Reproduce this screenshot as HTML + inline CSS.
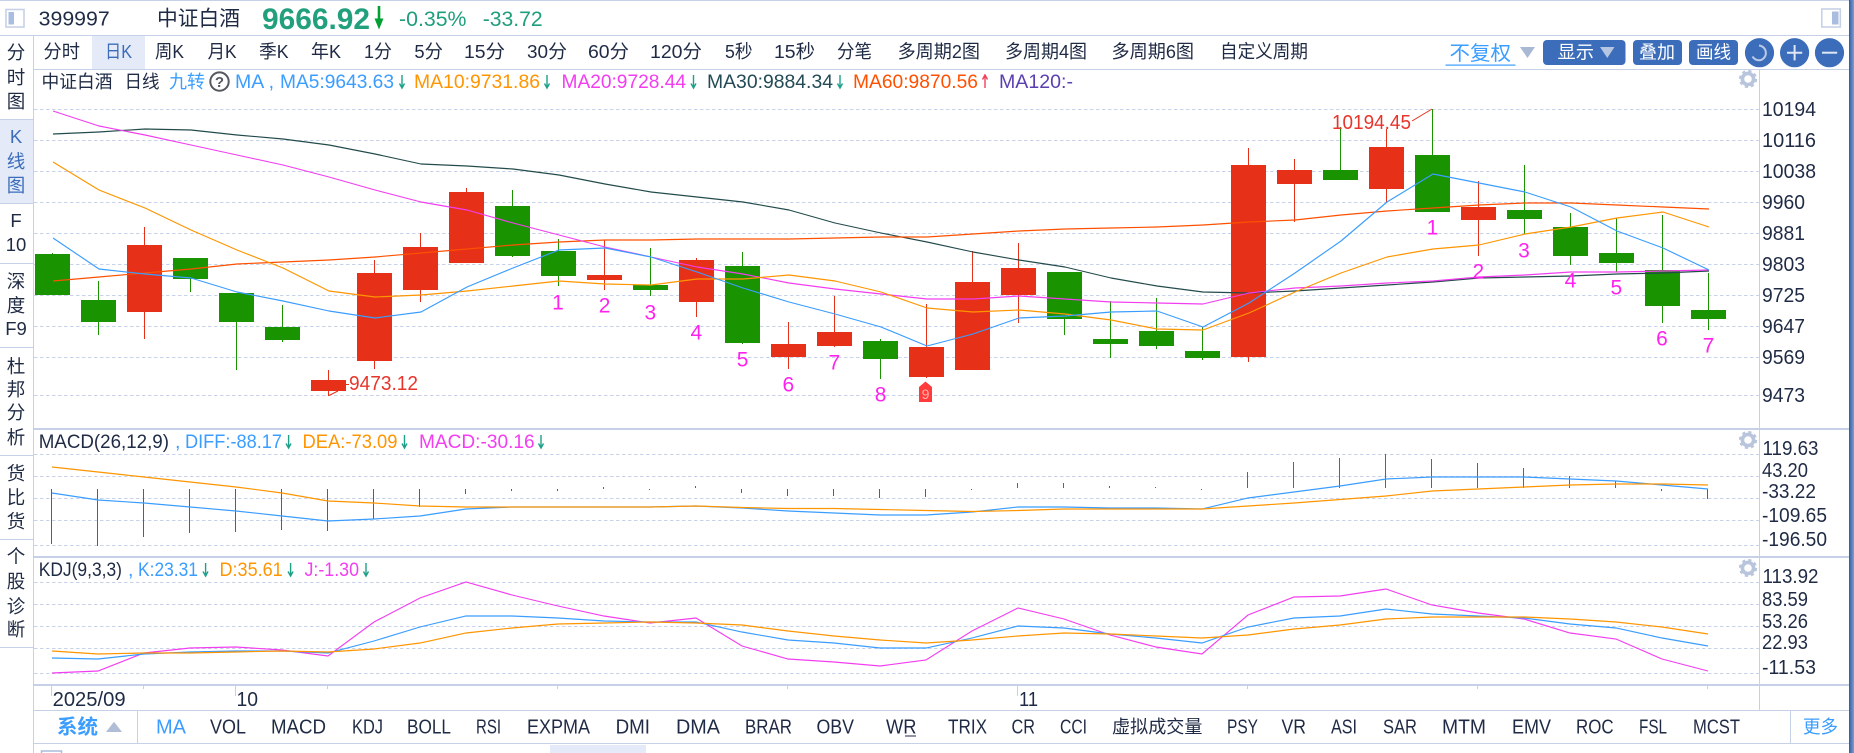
<!DOCTYPE html>
<html lang="zh"><head><meta charset="utf-8"><title>中证白酒</title>
<style>
html,body{margin:0;padding:0;background:#fff;width:1854px;height:753px;overflow:hidden}
svg{display:block;position:absolute;left:0;top:0}
text{font-family:"Liberation Sans","Noto Sans CJK SC",sans-serif;fill:#1f2a44;font-size:18px}
.ax text{font-size:20.5px}
.num text{fill:#ff22ee;font-size:21px;text-anchor:middle}
.side text{text-anchor:middle;font-size:18.5px}
.b{fill:#3a9dff}.o{fill:#ff9500}.p{fill:#f23ef0}.d{fill:#234b55}.r{fill:#ff5000}.v{fill:#5a3fb0}
.bar text{font-size:18.5px}
.lg text{font-size:19.5px}
.tb text{font-size:20px}
.tb text.cj,.lg text.cj{font-size:18px}
</style></head><body>
<svg width="1854" height="753" viewBox="0 0 1854 753" xmlns="http://www.w3.org/2000/svg">
<defs><linearGradient id="sb" x1="0" x2="1" y1="0" y2="0"><stop offset="0" stop-color="#2f5ca3"/><stop offset="1" stop-color="#7f9dd0"/></linearGradient></defs>
<!-- frames -->
<rect x="0" y="119" width="33" height="84" fill="#e4eaf7"/>
<rect x="92" y="36" width="53" height="33" fill="#e4eaf7"/>
<rect x="550" y="745" width="96" height="8" fill="#e4eaf7"/>
<g fill="#c6d1e8">
<rect x="0" y="0" width="1849" height="1"/>
<rect x="0" y="35" width="1849" height="1"/>
<rect x="34" y="69" width="1815" height="1"/>
<rect x="33" y="36" width="1" height="717"/>
<rect x="1759" y="70" width="1" height="640" fill="#c6d1e8"/>
<rect x="34" y="428" width="1815" height="2"/>
<rect x="34" y="556" width="1815" height="2"/>
<rect x="34" y="684" width="1815" height="2"/>
<rect x="34" y="710" width="1815" height="1"/>
<rect x="34" y="743" width="1815" height="1"/>
<rect x="137" y="711" width="1" height="32"/>
<rect x="1790" y="711" width="1" height="32"/>
<rect x="0" y="119" width="33" height="1"/><rect x="0" y="203" width="33" height="1"/>
<rect x="0" y="263" width="33" height="1"/><rect x="0" y="347" width="33" height="1"/>
<rect x="0" y="455" width="33" height="1"/><rect x="0" y="539" width="33" height="1"/>
<rect x="0" y="647" width="33" height="1"/>
</g>
<rect x="1849" y="0" width="5" height="753" fill="url(#sb)"/>
<rect x="41.5" y="751" width="20" height="3" fill="none" stroke="#a9bbdb" stroke-width="1.5"/>
<!-- grid -->
<path d="M34 109.5H1759M34 140.5H1759M34 171.5H1759M34 202.5H1759M34 233.5H1759M34 264.5H1759M34 295.5H1759M34 326.5H1759M34 357.5H1759M34 395.5H1759M34 454.5H1759M34 476.5H1759M34 498.5H1759M34 520.5H1759M34 545.5H1759M34 582.5H1759M34 604.5H1759M34 626.5H1759M34 648.5H1759M34 673.5H1759" stroke="#c8d2e8" stroke-width="1" stroke-dasharray="3.5 2.5" fill="none"/>
<!-- header -->
<rect x="6" y="9.5" width="18" height="17.5" fill="#fff" stroke="#c6d1e8" stroke-width="1.6"/>
<rect x="8.5" y="12" width="5.5" height="12.5" fill="#a8bddf"/>
<rect x="1821.8" y="9" width="18.5" height="18" fill="#fff" stroke="#c6d1e8" stroke-width="1.6"/>
<rect x="1832" y="11.5" width="6.5" height="13" fill="#a8bddf"/>
<text x="38.7" y="25.5" style="font-size:20.5px" textLength="71" lengthAdjust="spacingAndGlyphs">399997</text>
<text x="157" y="25.5" style="font-size:21px" textLength="83" lengthAdjust="spacingAndGlyphs">中证白酒</text>
<text x="262" y="29" style="font-size:30px;font-weight:bold;fill:#22a07e" textLength="108" lengthAdjust="spacingAndGlyphs">9666.92</text>
<path d="M377.7 6h2.6v12.5h3.2l-4.5 11-4.5-11h3.2z" fill="#00a032"/>
<text x="399" y="26" style="font-size:21.5px;fill:#1f9e7c" textLength="67.5" lengthAdjust="spacingAndGlyphs">-0.35%</text>
<text x="482.7" y="26" style="font-size:21.5px;fill:#1f9e7c" textLength="60" lengthAdjust="spacingAndGlyphs">-33.72</text>
<!-- toolbar -->
<g class="bar">
<text x="43.5" y="58" textLength="36.5" lengthAdjust="spacingAndGlyphs">分时</text>
<text x="105" y="58" textLength="27" lengthAdjust="spacingAndGlyphs" style="fill:#3b6dbb">日K</text>
<text x="155" y="58" textLength="29" lengthAdjust="spacingAndGlyphs">周K</text>
<text x="207.6" y="58" textLength="29" lengthAdjust="spacingAndGlyphs">月K</text>
<text x="259" y="58" textLength="29.6" lengthAdjust="spacingAndGlyphs">季K</text>
<text x="311" y="58" textLength="30" lengthAdjust="spacingAndGlyphs">年K</text>
<text x="364" y="58" textLength="28" lengthAdjust="spacingAndGlyphs">1分</text>
<text x="414.4" y="58" textLength="28.6" lengthAdjust="spacingAndGlyphs">5分</text>
<text x="464" y="58" textLength="41" lengthAdjust="spacingAndGlyphs">15分</text>
<text x="527" y="58" textLength="40" lengthAdjust="spacingAndGlyphs">30分</text>
<text x="588" y="58" textLength="41" lengthAdjust="spacingAndGlyphs">60分</text>
<text x="650" y="58" textLength="52" lengthAdjust="spacingAndGlyphs">120分</text>
<text x="725" y="58" textLength="27.5" lengthAdjust="spacingAndGlyphs">5秒</text>
<text x="774" y="58" textLength="41" lengthAdjust="spacingAndGlyphs">15秒</text>
<text x="837" y="58" textLength="35" lengthAdjust="spacingAndGlyphs">分笔</text>
<text x="897.6" y="58" textLength="82.4" lengthAdjust="spacingAndGlyphs">多周期2图</text>
<text x="1005" y="58" textLength="82" lengthAdjust="spacingAndGlyphs">多周期4图</text>
<text x="1111.5" y="58" textLength="82.5" lengthAdjust="spacingAndGlyphs">多周期6图</text>
<text x="1220" y="58" textLength="88" lengthAdjust="spacingAndGlyphs">自定义周期</text>
</g>
<text x="1449.5" y="60" style="font-size:20px;fill:#3a9dff" textLength="61.5" lengthAdjust="spacingAndGlyphs">不复权</text>
<rect x="1445.5" y="64.5" width="70" height="1.2" fill="#3a9dff"/>
<path d="M1520 47h15l-7.5 11z" fill="#a9b8d3"/>
<rect x="1543" y="40" width="82.5" height="25" rx="4" fill="#3b6dbb"/>
<rect x="1633" y="40" width="49" height="25" rx="4" fill="#3b6dbb"/>
<rect x="1689" y="40" width="49" height="25" rx="4" fill="#3b6dbb"/>
<text x="1557.5" y="58.5" style="font-size:18px;fill:#fff" textLength="36.5" lengthAdjust="spacingAndGlyphs">显示</text>
<path d="M1600 47h14.5l-7.2 11z" fill="#b5c5e2"/>
<text x="1639" y="58.5" style="font-size:18px;fill:#fff" textLength="36" lengthAdjust="spacingAndGlyphs">叠加</text>
<text x="1696" y="58.5" style="font-size:18px;fill:#fff" textLength="35" lengthAdjust="spacingAndGlyphs">画线</text>
<circle cx="1759.5" cy="52.7" r="14.6" fill="#3b6dbb"/>
<circle cx="1794.6" cy="52.7" r="14.6" fill="#3b6dbb"/>
<circle cx="1829.5" cy="52.7" r="14.6" fill="#3b6dbb"/>
<path d="M1759 45.5a7.5 7.5 0 0 1 2 14.5a7.5 7.5 0 0 1-8.5-3.5" fill="none" stroke="#b9c9e6" stroke-width="2"/>
<path d="M1787 52.7h15.2M1794.6 45v15.4" stroke="#dfe7f5" stroke-width="2" fill="none"/>
<path d="M1822 52.7h15.2" stroke="#dfe7f5" stroke-width="2" fill="none"/>
<!-- sidebar -->
<g class="side">
<text x="16" y="59">分</text><text x="16" y="84">时</text><text x="16" y="108">图</text>
<text x="16" y="143" style="fill:#3b6dbb">K</text><text x="16" y="168" style="fill:#3b6dbb">线</text><text x="16" y="192" style="fill:#3b6dbb">图</text>
<text x="16" y="227">F</text><text x="16" y="251">10</text>
<text x="16" y="288">深</text><text x="16" y="312">度</text><text x="16" y="335">F9</text>
<text x="16" y="373">杜</text><text x="16" y="396">邦</text><text x="16" y="419">分</text><text x="16" y="444">析</text>
<text x="16" y="480">货</text><text x="16" y="504">比</text><text x="16" y="528">货</text>
<text x="16" y="563">个</text><text x="16" y="588">股</text><text x="16" y="613">诊</text><text x="16" y="636">断</text>
</g>
<!-- legend main -->
<g class="lg">
<text x="41.5" y="88" class="cj" textLength="71" lengthAdjust="spacingAndGlyphs">中证白酒</text>
<text x="124.5" y="88" class="cj" textLength="35" lengthAdjust="spacingAndGlyphs">日线</text>
<text x="169" y="88" class="b cj" textLength="36" lengthAdjust="spacingAndGlyphs">九转</text>
<text x="235" y="88" class="b" textLength="39" lengthAdjust="spacingAndGlyphs">MA ,</text>
<text x="280" y="88" class="b" textLength="114" lengthAdjust="spacingAndGlyphs">MA5:9643.63</text>
<text x="414" y="88" class="o" textLength="126" lengthAdjust="spacingAndGlyphs">MA10:9731.86</text>
<text x="561.5" y="88" class="p" textLength="124.5" lengthAdjust="spacingAndGlyphs">MA20:9728.44</text>
<text x="707" y="88" class="d" textLength="126" lengthAdjust="spacingAndGlyphs">MA30:9884.34</text>
<text x="853" y="88" class="r" textLength="125" lengthAdjust="spacingAndGlyphs">MA60:9870.56</text>
<text x="999" y="88" class="v" textLength="74" lengthAdjust="spacingAndGlyphs">MA120:-</text>
</g>
<circle cx="219.5" cy="81.6" r="9.2" fill="#fff" stroke="#55585f" stroke-width="2"/>
<text x="219.5" y="87" text-anchor="middle" style="font-size:15px;fill:#55585f;font-weight:bold">?</text>
<path d="M402 75V88M399.5 83.5L402 88L404.5 83.5M547 75V88M544.5 83.5L547 88L549.5 83.5M693.5 75V88M691 83.5L693.5 88L696 83.5M840 75V88M837.5 83.5L840 88L842.5 83.5M288.6 435V448M286 443.5L288.6 448L291 443.5M404.5 435V448M402 443.5L404.5 448L407 443.5M541 435V448M538.5 443.5L541 448L543.5 443.5M205.6 563V576M203 571.5L205.6 576L208 571.5M290.6 563V576M288 571.5L290.6 576L293 571.5M366 563V576M363.5 571.5L366 576L368.5 571.5" stroke="#1da08a" stroke-width="1.4" fill="none"/>
<path d="M985 88V75M982.5 79.5L985 75L987.5 79.5" stroke="#f0405a" stroke-width="1.4" fill="none"/>
<!-- gears -->
<g fill="none" stroke="#b9c5dc">
<circle cx="1748" cy="79" r="5.6" stroke-width="3.6"/><circle cx="1748" cy="79" r="8" stroke-width="2.2" stroke-dasharray="3.1 3.2"/>
<circle cx="1748" cy="440" r="5.6" stroke-width="3.6"/><circle cx="1748" cy="440" r="8" stroke-width="2.2" stroke-dasharray="3.1 3.2"/>
<circle cx="1748" cy="568" r="5.6" stroke-width="3.6"/><circle cx="1748" cy="568" r="8" stroke-width="2.2" stroke-dasharray="3.1 3.2"/>
</g>
<!-- candles -->
<path shape-rendering="crispEdges" fill="#1a9300" d="M35 254h35v41h-35zM81 300h35v22h-35zM173 258h35v21h-35zM219 293h35v29h-35zM265 327h35v13h-35zM495 206h35v50h-35zM541 251h35v25h-35zM633 285h35v5h-35zM725 266h35v77h-35zM863 341h35v18h-35zM1047 272h35v47h-35zM1093 339h35v5h-35zM1139 331h35v15h-35zM1185 351h35v7h-35zM1323 170h35v10h-35zM1415 155h35v57h-35zM1507 210h35v9h-35zM1553 227h35v29h-35zM1599 253h35v10h-35zM1645 270h35v36h-35zM1691 310h35v9h-35z"/>
<path shape-rendering="crispEdges" fill="#e63118" d="M127 245h35v67h-35zM311 380h35v11h-35zM357 273h35v88h-35zM403 247h35v43h-35zM449 192h35v71h-35zM587 275h35v5h-35zM679 260h35v42h-35zM771 344h35v13h-35zM817 332h35v14h-35zM909 347h35v30h-35zM955 282h35v88h-35zM1001 268h35v27h-35zM1231 165h35v192h-35zM1277 170h35v14h-35zM1369 147h35v42h-35zM1461 207h35v13h-35z"/>
<path shape-rendering="crispEdges" stroke="#1a9300" stroke-width="1" fill="none" d="M52.5 253V254M98.5 281V335M190.5 279V292M236.5 322V370M282.5 305V342M512.5 190V257M558.5 239V286M650.5 248V296M742.5 252V344M880.5 339V379M1064.5 319V335M1110.5 301V358M1156.5 298V349M1202.5 327V360M1340.5 127V180M1432.5 109V155M1524.5 165V234M1570.5 213V265M1616.5 218V272M1662.5 215V323M1708.5 273V330"/>
<path shape-rendering="crispEdges" stroke="#e63118" stroke-width="1" fill="none" d="M144.5 227V339M328.5 370V396M374.5 260V369M420.5 233V302M466.5 188V192M604.5 240V290M696.5 258V317M788.5 322V369M834.5 296V347M926.5 304V378M972.5 251V282M1018.5 243V323M1248.5 148V362M1294.5 159V222M1386.5 129V202M1478.5 181V256"/>
<!-- MA lines -->
<g fill="none" stroke-width="1.15" stroke-linejoin="round">
<polyline stroke="#234b4b" points="53,134 99,132 145,129 191,130 237,135 283,139 329,145 375,154 421,164 467,166 513,169 559,175 605,184 651,192 697,197 743,202 789,210 835,223 881,233 927,242 973,252 1019,260 1065,267 1111,278 1157,286 1203,292 1249,293 1295,291 1341,288 1387,285 1433,282 1479,278 1525,277 1571,276 1617,274 1663,273 1709,271"/>
<polyline stroke="#ff5000" points="53,281 99,277 145,273 191,269 237,264 283,262 329,260 375,257 421,253 467,249 513,245 559,242 605,240 651,240 697,239 743,239 789,239 835,238 881,237 927,237 973,234 1019,231 1065,229 1111,228 1157,227 1203,225 1249,222 1295,220 1341,215 1387,211 1433,208 1479,205 1525,203 1571,203 1617,205 1663,207 1709,209"/>
<polyline stroke="#f23ef0" points="53,111 99,126 145,135 191,145 237,155 283,165 329,177 375,190 421,202 467,210 513,223 559,235 605,247 651,257 697,267 743,274 789,283 835,289 881,294 927,299 973,299 1019,296 1065,299 1111,302 1157,303 1203,304 1249,293 1295,288 1341,286 1387,283 1433,281 1479,277 1525,275 1571,272 1617,272 1663,271 1709,270"/>
<polyline stroke="#ff9500" points="53,162 99,190 145,208 191,230 237,250 283,268 329,291 375,297 421,295 467,291 513,286 559,281 605,284 651,285 697,279 743,279 789,275 835,281 881,292 927,308 973,312 1019,310 1065,314 1111,320 1157,329 1203,330 1249,313 1295,292 1341,273 1387,257 1433,249 1479,245 1525,234 1571,227 1617,218 1663,212 1709,227"/>
<polyline stroke="#3a9dff" points="53,238 99,269 145,274 191,278 237,292 283,301 329,311 375,318 421,312 467,287 513,268 559,250 605,248 651,257 697,272 743,288 789,302 835,314 881,327 927,346 973,334 1019,318 1065,316 1111,312 1157,311 1203,327 1249,303 1295,273 1341,241 1387,202 1433,174 1479,183 1525,192 1571,207 1617,231 1663,248 1709,270"/>
</g>
<!-- extremes -->
<text x="1332" y="129" style="font-size:20px;fill:#e8352c" textLength="79" lengthAdjust="spacingAndGlyphs">10194.45</text>
<path d="M1432 109L1412 121" stroke="#e63118" stroke-width="1" fill="none"/>
<text x="349" y="390" style="font-size:20px;fill:#e8352c" textLength="69" lengthAdjust="spacingAndGlyphs">9473.12</text>
<path d="M329 395.5L338 391M346 384.5H349" stroke="#e63118" stroke-width="1" fill="none"/>
<!-- nine-turn numbers -->
<g class="num">
<text x="558" y="309.5">1</text><text x="604.6" y="312.5">2</text><text x="650.4" y="319.5">3</text><text x="696.3" y="339.5">4</text><text x="742.6" y="366.5">5</text><text x="788.4" y="391.5">6</text><text x="834.3" y="369.5">7</text><text x="880.6" y="401.5">8</text>
<text x="1432.5" y="234.5">1</text><text x="1478.4" y="278.5">2</text><text x="1524" y="257.5">3</text><text x="1570.5" y="287.5">4</text><text x="1616.4" y="294.5">5</text><text x="1662" y="345.5">6</text><text x="1708.5" y="352.5">7</text>
</g>
<path d="M925.5 381.5L932 387V402H919V387z" fill="#ff3b3b"/>
<text x="925.5" y="399" text-anchor="middle" style="font-size:14px;fill:#ffb0a8">9</text>
<!-- MACD -->
<g class="lg">
<text x="38.7" y="448" textLength="130.3" lengthAdjust="spacingAndGlyphs">MACD(26,12,9)</text>
<text x="175" y="448" class="b">,</text>
<text x="185" y="448" class="b" textLength="97" lengthAdjust="spacingAndGlyphs">DIFF:-88.17</text>
<text x="302.5" y="448" class="o" textLength="95" lengthAdjust="spacingAndGlyphs">DEA:-73.09</text>
<text x="419" y="448" class="p" textLength="115.6" lengthAdjust="spacingAndGlyphs">MACD:-30.16</text>
</g>
<path shape-rendering="crispEdges" stroke="#1a9300" fill="none" d="M51.5 489V544M97.5 489V546M143.5 489V537M189.5 489V533M235.5 489V532M281.5 489V530M327.5 489V531M373.5 489V519M419.5 489V507M465.5 489V494M511.5 489V491M557.5 489V491M649.5 489V490M741.5 489V493M787.5 489V496M833.5 489V496M879.5 489V498M925.5 489V497M971.5 489V490M1201.5 489V490M1661.5 489V491M1707.5 489V499"/>
<path shape-rendering="crispEdges" stroke="#e63118" fill="none" d="M603.5 487V489M695.5 486V488M1017.5 483V488M1063.5 483V488M1109.5 486V488M1155.5 487V488M1247.5 472V488M1293.5 462V488M1339.5 458V488M1385.5 454V488M1431.5 459V488M1477.5 463V488M1523.5 468V488M1569.5 476V488M1615.5 481V488"/>
<g fill="none" stroke-width="1.15">
<polyline stroke="#3a9dff" points="52,493 98,500 144,503 190,507 236,511 282,516 328,521 374,519 420,516 466,509 512,507 558,507 604,507 650,507 696,506 742,508 788,511 834,513 880,515 926,515 972,512 1018,507 1064,507 1110,508 1156,508 1202,509 1248,498 1294,492 1340,486 1386,479 1432,477 1478,477 1524,477 1570,479 1616,481 1662,485 1708,489"/>
<polyline stroke="#ff9500" points="52,467 98,472 144,477 190,482 236,487 282,493 328,501 374,503 420,506 466,507 512,507 558,507 604,507 650,507 696,506 742,507.5 788,508.5 834,508.5 880,509.5 926,510.5 972,511.5 1018,510.5 1064,509 1110,509 1156,509 1202,509 1248,506 1294,503 1340,499.5 1386,496 1432,491 1478,489 1524,487 1570,485 1616,484 1662,484 1708,485"/>
</g>
<!-- KDJ -->
<g class="lg">
<text x="38.7" y="576" textLength="83.3" lengthAdjust="spacingAndGlyphs">KDJ(9,3,3)</text>
<text x="128" y="576" class="b">,</text>
<text x="138" y="576" class="b" textLength="60" lengthAdjust="spacingAndGlyphs">K:23.31</text>
<text x="219.5" y="576" class="o" textLength="63.2" lengthAdjust="spacingAndGlyphs">D:35.61</text>
<text x="304.5" y="576" class="p" textLength="54.5" lengthAdjust="spacingAndGlyphs">J:-1.30</text>
</g>
<g fill="none" stroke-width="1.15">
<polyline stroke="#f23ef0" points="52,673 98,671 144,653 190,648 236,647 282,650 328,656 374,622 420,598 466,582 512,595 558,606 604,616 650,623 696,618 742,646 788,659 834,662 880,666 926,660 972,631 1018,608 1064,619 1110,635 1156,647 1202,654 1248,615 1294,597 1340,596 1386,589 1432,605 1478,613 1524,619 1570,633 1616,639 1662,659 1708,671"/>
<polyline stroke="#3a9dff" points="52,658 98,659 144,654 190,652 236,651 282,651 328,653 374,641 420,627 466,616 512,616 558,618 604,621 650,622 696,622 742,632 788,640 834,643 880,648 926,648 972,638 1018,626 1064,628 1110,634 1156,638 1202,643 1248,627 1294,618 1340,616 1386,609 1432,614 1478,616 1524,618 1570,624 1616,628 1662,638 1708,646"/>
<polyline stroke="#ff9500" points="52,651 98,654 144,653 190,653 236,652 282,651 328,652 374,649 420,643 466,633 512,628 558,624 604,623 650,622 696,623 742,625 788,631 834,636 880,640 926,643 972,640 1018,636 1064,633 1110,634 1156,636 1202,638 1248,635 1294,629 1340,625 1386,619 1432,617 1478,617 1524,617 1570,619 1616,622 1662,627 1708,634"/>
</g>
<!-- axes labels -->
<g class="ax">
<text x="1762" y="116" textLength="54" lengthAdjust="spacingAndGlyphs">10194</text>
<text x="1762" y="147" textLength="54" lengthAdjust="spacingAndGlyphs">10116</text>
<text x="1762" y="178" textLength="54" lengthAdjust="spacingAndGlyphs">10038</text>
<text x="1762" y="209" textLength="43" lengthAdjust="spacingAndGlyphs">9960</text>
<text x="1762" y="240" textLength="43" lengthAdjust="spacingAndGlyphs">9881</text>
<text x="1762" y="271" textLength="43" lengthAdjust="spacingAndGlyphs">9803</text>
<text x="1762" y="302" textLength="43" lengthAdjust="spacingAndGlyphs">9725</text>
<text x="1762" y="333" textLength="43" lengthAdjust="spacingAndGlyphs">9647</text>
<text x="1762" y="364" textLength="43" lengthAdjust="spacingAndGlyphs">9569</text>
<text x="1762" y="402" textLength="43" lengthAdjust="spacingAndGlyphs">9473</text>
<text x="1762.5" y="455" textLength="56" lengthAdjust="spacingAndGlyphs">119.63</text>
<text x="1762" y="477" textLength="46" lengthAdjust="spacingAndGlyphs">43.20</text>
<text x="1762" y="498" textLength="54" lengthAdjust="spacingAndGlyphs">-33.22</text>
<text x="1762" y="522" textLength="65" lengthAdjust="spacingAndGlyphs">-109.65</text>
<text x="1762" y="546" textLength="65" lengthAdjust="spacingAndGlyphs">-196.50</text>
<text x="1762.5" y="583" textLength="56" lengthAdjust="spacingAndGlyphs">113.92</text>
<text x="1762" y="606" textLength="46" lengthAdjust="spacingAndGlyphs">83.59</text>
<text x="1762" y="628" textLength="46" lengthAdjust="spacingAndGlyphs">53.26</text>
<text x="1762" y="649" textLength="46" lengthAdjust="spacingAndGlyphs">22.93</text>
<text x="1762" y="674" textLength="54" lengthAdjust="spacingAndGlyphs">-11.53</text>
</g>
<!-- x axis -->
<path shape-rendering="crispEdges" d="M51.5 686V696M235.5 686V696M1017.5 686V696M143.5 686V689M327.5 686V689M557.5 686V689M787.5 686V689M1247.5 686V689M1477.5 686V689M1707.5 686V689" stroke="#c6d1e8" fill="none"/>
<g class="tb">
<text x="52.6" y="706" textLength="73" lengthAdjust="spacingAndGlyphs">2025/09</text>
<text x="236.5" y="706" textLength="21.5" lengthAdjust="spacingAndGlyphs">10</text>
<text x="1019" y="706" textLength="19" lengthAdjust="spacingAndGlyphs">11</text>
</g>
<!-- bottom tabs -->
<text x="57" y="733.5" style="font-size:20px;font-weight:bold;fill:#3a9dff" textLength="41" lengthAdjust="spacingAndGlyphs">系统</text>
<path d="M114 721.7l8 10.3h-16z" fill="#b0bdd6"/>
<g class="tb">
<text x="156" y="733.5" class="b" textLength="30" lengthAdjust="spacingAndGlyphs">MA</text>
<text x="210" y="733.5" textLength="36" lengthAdjust="spacingAndGlyphs">VOL</text>
<text x="271" y="733.5" textLength="55" lengthAdjust="spacingAndGlyphs">MACD</text>
<text x="352" y="733.5" textLength="31" lengthAdjust="spacingAndGlyphs">KDJ</text>
<text x="407" y="733.5" textLength="44" lengthAdjust="spacingAndGlyphs">BOLL</text>
<text x="476" y="733.5" textLength="25" lengthAdjust="spacingAndGlyphs">RSI</text>
<text x="527" y="733.5" textLength="63" lengthAdjust="spacingAndGlyphs">EXPMA</text>
<text x="615.6" y="733.5" textLength="34.4" lengthAdjust="spacingAndGlyphs">DMI</text>
<text x="676" y="733.5" textLength="44" lengthAdjust="spacingAndGlyphs">DMA</text>
<text x="745" y="733.5" textLength="47" lengthAdjust="spacingAndGlyphs">BRAR</text>
<text x="816.5" y="733.5" textLength="37.5" lengthAdjust="spacingAndGlyphs">OBV</text>
<text x="886" y="733.5" textLength="30.5" lengthAdjust="spacingAndGlyphs">WR</text>
<rect x="905" y="735.5" width="11" height="1" fill="#1f2a44"/>
<text x="948" y="733.5" textLength="39" lengthAdjust="spacingAndGlyphs">TRIX</text>
<text x="1011.5" y="733.5" textLength="23.5" lengthAdjust="spacingAndGlyphs">CR</text>
<text x="1060" y="733.5" textLength="27" lengthAdjust="spacingAndGlyphs">CCI</text>
<text x="1112" y="733" class="cj" textLength="90.5" lengthAdjust="spacingAndGlyphs">虚拟成交量</text>
<text x="1227" y="733.5" textLength="31" lengthAdjust="spacingAndGlyphs">PSY</text>
<text x="1281.5" y="733.5" textLength="24.5" lengthAdjust="spacingAndGlyphs">VR</text>
<text x="1331" y="733.5" textLength="26" lengthAdjust="spacingAndGlyphs">ASI</text>
<text x="1383" y="733.5" textLength="34" lengthAdjust="spacingAndGlyphs">SAR</text>
<text x="1442" y="733.5" textLength="44" lengthAdjust="spacingAndGlyphs">MTM</text>
<text x="1512" y="733.5" textLength="39" lengthAdjust="spacingAndGlyphs">EMV</text>
<text x="1576" y="733.5" textLength="37.6" lengthAdjust="spacingAndGlyphs">ROC</text>
<text x="1639" y="733.5" textLength="28" lengthAdjust="spacingAndGlyphs">FSL</text>
<text x="1693" y="733.5" textLength="47" lengthAdjust="spacingAndGlyphs">MCST</text>
<text x="1803" y="733" class="b cj" textLength="35" lengthAdjust="spacingAndGlyphs">更多</text>
</g>
</svg>
</body></html>
